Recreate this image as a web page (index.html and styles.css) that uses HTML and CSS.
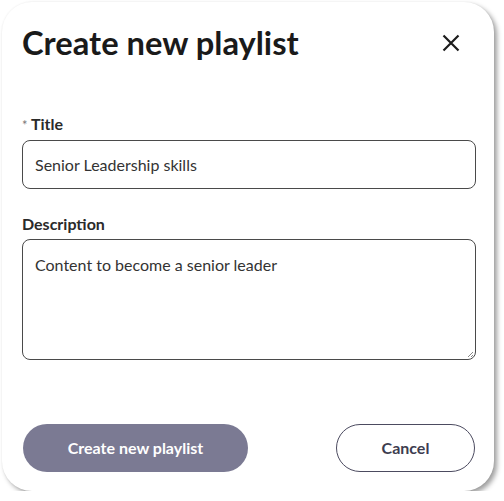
FILE: index.html
```html
<!DOCTYPE html>
<html lang="en">
<head>
<meta charset="utf-8">
<link rel="stylesheet" href="styles.css">
</head>
<body>
<div class="modal">
  <div class="header">
    <h1 class="heading">Create new playlist</h1>
    <button class="close" aria-label="Close">
      <svg width="18" height="18" viewBox="0 0 18 18"><path d="M1.5 1.5L16.5 16.5M16.5 1.5L1.5 16.5" stroke="#1c1c1c" stroke-width="2.2" fill="none"/></svg>
    </button>
  </div>
  <div class="field field-title">
    <label class="label"><span class="req">*</span> Title</label>
    <div class="input">Senior Leadership skills</div>
  </div>
  <div class="field field-desc">
    <label class="label">Description</label>
    <div class="textarea">Content to become a senior leader
      <svg class="grip" width="8" height="8" viewBox="0 0 8 8"><path d="M7 2L2 7M7 5L5 7" stroke="#888" stroke-width="1"/></svg>
    </div>
  </div>
  <div class="actions">
    <button class="btn btn-primary">Create new playlist</button>
    <button class="btn btn-secondary">Cancel</button>
  </div>
</div>
</body>
</html>
```
FILE: styles.css
```css
* { box-sizing: border-box; }
html, body { margin: 0; padding: 0; background: #fff; }
body { font-family: Lato, "Open Sans", sans-serif; color: #222; }
.modal {
  margin: 2px 0 0 2px;
  width: 492px;
  height: 489px;
  background: #fff;
  border-radius: 30px;
  box-shadow: 3px 3px 5px rgba(0,0,0,0.38), 0 0 2px rgba(0,0,0,0.06);
  padding: 22px 18px 0 20px;
  display: flex;
  flex-direction: column;
}
.header { display: flex; align-items: center; justify-content: space-between; height: 38px; }
.heading { margin: 0; font-size: 32.7px; font-weight: 700; line-height: 38px; color: #1a1a1a; }
.close { border: 0; background: none; padding: 0; margin-right: 16px; width: 18px; height: 18px; display: flex; }
.field { display: flex; flex-direction: column; gap: 6px; }
.field-title { margin-top: 53px; }
.field-desc { margin-top: 26px; }
.label { font-size: 16px; font-weight: 700; line-height: 18px; color: #2a2a2a; }
.req { font-weight: 400; color: #777; font-size: 13px; }
.input, .textarea {
  border: 1px solid #4a4a4a;
  border-radius: 8px;
  font-size: 16px;
  color: #333;
  padding: 0 12px;
  line-height: 20px;
  width: 454px;
}
.input { height: 49px; display: flex; align-items: center; }
.textarea { height: 121px; padding-top: 15px; position: relative; }
.grip { position: absolute; right: 1px; bottom: 1px; }
.actions { margin-top: 64px; display: flex; justify-content: space-between; padding-left: 1px; }
.btn { height: 48px; border-radius: 24px; font-family: inherit; font-size: 16px; font-weight: 700; line-height: 20px; }
.btn-primary { width: 225px; background: #7b7a93; color: #fff; border: 0; }
.btn-secondary { width: 139px; background: #fff; color: #3d3d50; border: 1px solid #4c4b60; margin-right: 1px; }
```
